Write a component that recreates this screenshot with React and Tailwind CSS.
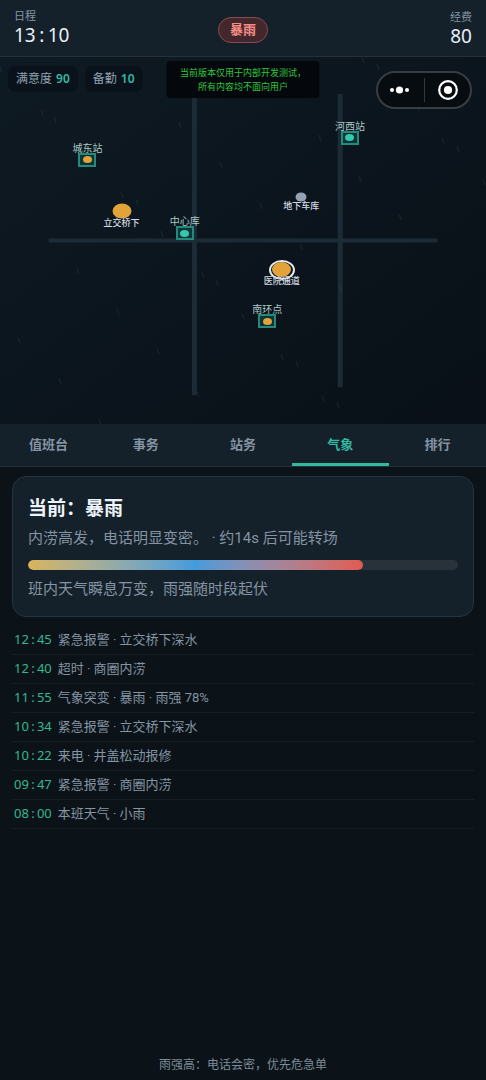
import { useState } from "react";

const tabs = ["值班台", "事务", "站务", "气象", "排行"];

const stations = [
    { name: "城东站", x: 18, y: 28, busy: true },
    { name: "河西站", x: 72, y: 22, busy: false },
    { name: "中心库", x: 38, y: 48, busy: false },
    { name: "南环点", x: 55, y: 72, busy: true },
];

const incidents = [
    { name: "立交桥下", x: 25, y: 42, type: "open" },
    { name: "医院通道", x: 58, y: 58, type: "selected" },
    { name: "地下车库", x: 62, y: 38, type: "idle" },
];

const rain = [
    [1, 10], [42, 53], [55, 60], [180, 65], [221, 105], [122, 135], [137, 142], [162, 174],
    [320, 78], [443, 81], [458, 89], [360, 119], [484, 122], [261, 146], [400, 157], [363, 0],
    [378, 7], [418, 48], [301, 187], [203, 215], [217, 223], [341, 229], [243, 256], [282, 297],
    [297, 304], [323, 338], [338, 345], [198, 334], [78, 211], [118, 252], [19, 280], [158, 291],
    [60, 321], [100, 362],
];

const logs = [
    { time: "12:45", text: "紧急报警 · 立交桥下深水" },
    { time: "12:40", text: "超时 · 商圈内涝" },
    { time: "11:55", text: "气象突变 · 暴雨 · 雨强 78%" },
    { time: "10:34", text: "紧急报警 · 立交桥下深水" },
    { time: "10:22", text: "来电 · 井盖松动报修" },
    { time: "09:47", text: "紧急报警 · 商圈内涝" },
    { time: "08:00", text: "本班天气 · 小雨" },
];

// Clock digits with a full-width colon
const Clock = ({ value, colonClass }) => {
    const [hours, minutes] = value.split(":");
    return (
        <time className="inline-flex font-['Noto_Sans','Noto_Sans_CJK_SC',sans-serif]">
            <span>{hours}</span>
            <span className={`text-center ${colonClass}`}>:</span>
            <span>{minutes}</span>
        </time>
    );
};

const Header = () => (
    <header className="grid grid-cols-3 items-center h-[53px] pt-[3px] px-[14px] box-content bg-[#14202a] border-b border-[#22313b]">
        <div>
            <p className="text-[11px] leading-3 text-[#8494a2]">日程</p>
            <p className="text-[19px] leading-6 text-[#e8eff6]">
                <Clock value="13:10" colonClass="w-3" />
            </p>
        </div>
        <div className="flex justify-center">
            <span className="px-[11px] py-[2px] rounded-full border border-[#8a4a4a] bg-[#43272d] text-[13px] leading-5 font-bold text-[#f58d86]">
                暴雨
            </span>
        </div>
        <div className="text-right">
            <p className="text-[11px] leading-3 text-[#8494a2]">经费</p>
            <p className="text-[19px] leading-6 text-[#e8eff6] font-['Noto_Sans',sans-serif]">80</p>
        </div>
    </header>
);

const Chip = ({ label, value }) => (
    <span className="flex items-center gap-1 px-2 h-[26px] rounded-lg bg-[#09121a] text-[12px] text-[#94a3b1]">
        {label}
        <b className="font-semibold text-[#35b8a0] font-['Noto_Sans',sans-serif]">{value}</b>
    </span>
);

const Station = ({ name, x, y, busy }) => (
    <button
        aria-label={name}
        className="absolute w-[18px] h-[14px] -translate-x-1/2 -translate-y-1/2 flex items-center justify-center border-2 border-[#25897c] bg-[#0d3439]"
        style={{ left: `${x}%`, top: `${y}%` }}
    >
        <span className={`w-[9px] h-[7px] rounded-[50%] ${busy ? "bg-[#e2a33a]" : "bg-[#35c9ab]"}`} />
        <span className="absolute bottom-full left-1/2 -translate-x-1/2 whitespace-nowrap text-[10px] leading-3 text-[#a9c9c6]">
            {name}
        </span>
    </button>
);

const Incident = ({ name, x, y, type }) => (
    <button
        aria-label={name}
        className="absolute -translate-x-1/2 -translate-y-1/2"
        style={{ left: `${x}%`, top: `${y}%` }}
    >
        {type === "open" && <span className="block w-[19px] h-[15px] rounded-[50%] bg-[#e2a33a]" />}
        {type === "idle" && <span className="block w-[11px] h-[9px] rounded-[50%] bg-[#94a3b3]" />}
        {type === "selected" && (
            <span className="flex w-[26px] h-5 items-center justify-center rounded-[50%] border-2 border-[#e4e9ee]">
                <span className="w-[19px] h-[15px] shrink-0 rounded-[50%] bg-[#e2a33a]" />
            </span>
        )}
        <span
            className={`absolute top-full left-1/2 -translate-x-1/2 whitespace-nowrap text-[9px] leading-[10px] font-medium text-[#d3dbe3] ${type === "selected" ? "-mt-1" : "-mt-px"}`}
        >
            {name}
        </span>
    </button>
);

const CityMap = () => (
    <section className="relative h-[34vh] overflow-hidden bg-gradient-to-br from-[#0e1a23] to-[#091017]">
        <svg className="absolute inset-0 w-full h-full" viewBox="0 0 486 367" preserveAspectRatio="none" aria-hidden="true">
            <g stroke="#1d2b36" fill="none">
                <path d="M194.4 29V338M340.2 37V330" strokeWidth="5" />
                <path d="M48.6 183.5H437.4" strokeWidth="4" />
            </g>
            <g stroke="#7c93a6" strokeOpacity="0.1" strokeWidth="1.5">
                {rain.map(([x, y], i) => (
                    <line key={i} x1={x - 1} y1={y} x2={x + 1} y2={y + 6} />
                ))}
            </g>
        </svg>

        {stations.map((s) => (
            <Station key={s.name} {...s} />
        ))}
        {incidents.map((s) => (
            <Incident key={s.name} {...s} />
        ))}

        <div className="absolute top-[9px] left-2 flex gap-[7px]">
            <Chip label="满意度" value="90" />
            <Chip label="备勤" value="10" />
        </div>

        <p className="absolute top-1 left-1/2 -translate-x-1/2 w-[153px] pt-[5px] pb-1 rounded bg-[#04080c] text-center whitespace-nowrap text-[9px] leading-[14px] text-[#30c43c]">
            当前版本仅用于内部开发测试，
            <br />
            所有内容均不面向用户
        </p>

        {/* Mini program capsule */}
        <div className="absolute top-[14px] right-[14px] flex items-center w-24 h-[38px] rounded-full border-2 border-[#383d42] bg-[#070c11]">
            <button aria-label="更多" className="flex-1 flex justify-center">
                <svg width="22" height="10" viewBox="0 0 22 10" fill="#fff">
                    <circle cx="2" cy="5" r="2" />
                    <circle cx="9.5" cy="5" r="3.6" />
                    <circle cx="17" cy="5" r="2" />
                </svg>
            </button>
            <span className="w-px h-6 bg-[#33383d]" />
            <button aria-label="关闭" className="flex-1 flex justify-center">
                <svg width="22" height="22" viewBox="0 0 22 22">
                    <circle cx="12" cy="11" r="8.8" fill="none" stroke="#fff" strokeWidth="2.2" />
                    <circle cx="12" cy="11" r="4.1" fill="#fff" />
                </svg>
            </button>
        </div>
    </section>
);

const WeatherCard = () => (
    <section className="rounded-[14px] border border-[#24333d] bg-[#14202a] px-[15px] pt-5 pb-4">
        <h2 className="text-[19px] leading-6 font-bold text-[#edf3f9]">当前：暴雨</h2>
        <p className="mt-1 text-[15px] leading-[27px] text-[#8494a2]">内涝高发，电话明显变密。 · 约14s 后可能转场</p>
        <div className="my-2 h-[10px] rounded-full overflow-hidden bg-[#28323b]">
            <div
                className="h-full rounded-full bg-gradient-to-r from-[#d9b45a] via-[#429bdc] to-[#e05a4e]"
                style={{ width: "78%" }}
            />
        </div>
        <p className="text-[15px] leading-[22px] text-[#8494a2]">班内天气瞬息万变，雨强随时段起伏</p>
    </section>
);

export default function App() {
    const [active, setActive] = useState("气象");

    return (
        <div className="min-h-screen flex flex-col bg-[#0b1218] font-[Roboto,'Noto_Sans_CJK_SC',sans-serif]">
            <Header />
            <CityMap />

            <nav className="flex h-[42px] box-content bg-[#14202a] border-b border-[#22313b]">
                {tabs.map((tab) => (
                    <button
                        key={tab}
                        onClick={() => setActive(tab)}
                        className={`flex-1 pt-[2px] border-b-[3px] text-[13px] font-bold ${active === tab ? "border-[#35b8a0] text-[#35b8a0]" : "border-transparent text-[#8494a2]"}`}
                    >
                        {tab}
                    </button>
                ))}
            </nav>

            <main className="flex-1 px-3 pt-[9px]">
                <WeatherCard />
                <ul className="mt-[9px]">
                    {logs.map((log) => (
                        <li
                            key={log.time}
                            className="flex items-center gap-[6px] h-[29px] px-[2px] border-b border-[#151f26] text-[13px] text-[#8494a2]"
                        >
                            <span className="text-[#35b88f]">
                                <Clock value={log.time} colonClass="w-2" />
                            </span>
                            <span>{log.text}</span>
                        </li>
                    ))}
                </ul>
            </main>

            <footer className="pb-[5px] text-center text-[12px] leading-5 text-[#7d8c99]">
                雨强高：电话会密，优先危急单
            </footer>
        </div>
    );
}
